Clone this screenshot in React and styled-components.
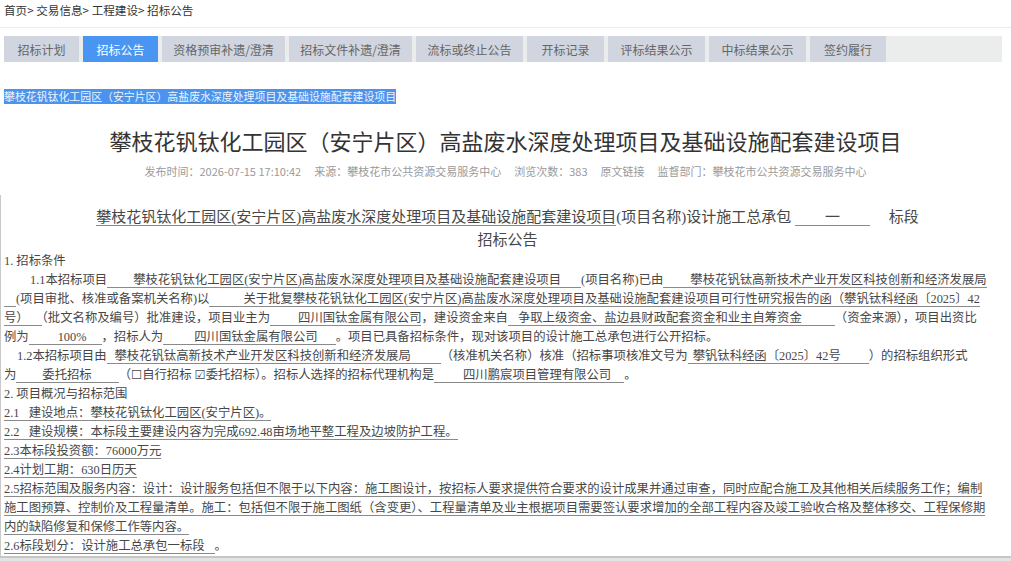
import React from 'react';
import styled, { createGlobalStyle } from 'styled-components';

const Global = createGlobalStyle`
  html, body { margin: 0; padding: 0; background: #fff; }
  body { font-family: "Noto Sans CJK SC", "Noto Sans", sans-serif; }
`;

const Page = styled.div`
  width: 1011px;
  height: 561px;
  overflow: hidden;
  display: flex;
  flex-direction: column;
`;

const Breadcrumb = styled.nav`
  height: 28px;
  box-sizing: border-box;
  padding: 3px 4px 0;
  font-size: 11.6px;
  line-height: 14px;
  color: #333;
  border-bottom: 1px solid #ececec;
`;

const TabBar = styled.div`
  margin: 8px 9px 0 4px;
  height: 26px;
  background: #ebeded;
  display: flex;
  gap: 4px;
`;

const Tab = styled.div`
  width: ${p => p.$w}px;
  background: ${p => (p.$active ? '#4b95f2' : '#d0d5df')};
  color: ${p => (p.$active ? '#fff' : '#666')};
  font-size: 12px;
  display: flex;
  align-items: center;
  justify-content: center;
  white-space: nowrap;
`;

const SelectedRow = styled.div`
  margin-top: 20px;
  padding-left: 4px;
  height: 15px;
`;

const Selected = styled.span`
  display: inline-block;
  height: 15px;
  line-height: 15px;
  font-size: 10.9px;
  background: #4a93ee;
  color: #eef3fb;
  white-space: nowrap;
`;

const Title = styled.h1`
  margin: 28px 0 0;
  font-size: 22px;
  line-height: 30px;
  font-weight: 400;
  color: #333;
  text-align: center;
`;

const Meta = styled.div`
  margin-top: 8px;
  display: flex;
  justify-content: center;
  gap: 13px;
  font-size: 11px;
  line-height: 16px;
  color: #9a9a9a;
  white-space: nowrap;
`;

const Doc = styled.section`
  margin-top: 16px;
  padding: 10.5px 0 0 3px;
  border-left: 1px solid #c9c9c9;
  border-bottom: 2px solid #c6c6c6;
  font-family: "Liberation Serif", "Noto Sans CJK SC", "DejaVu Sans", serif;
  color: #474747;
`;

const Footer = styled.div`
  flex: 1;
  background: #e4e4e4;
`;

const DocHead = styled.div`
  font-size: 15px;
  line-height: 23px;
  text-align: center;
  white-space: nowrap;
`;

const Line = styled.div`
  font-size: 12.35px;
  line-height: 19px;
  height: 19px;
  white-space: nowrap;
  padding-left: ${p => p.$indent || 0}px;
`;

const U = styled.span`
  border-bottom: 1px solid #8a8a8a;
  padding-left: ${p => p.$l || 0}px;
  padding-right: ${p => p.$r || 0}px;
`;

const tabs = [
  ['招标计划', 75],
  ['招标公告', 75, true],
  ['资格预审补遗/澄清', 123],
  ['招标文件补遗/澄清', 123],
  ['流标或终止公告', 107],
  ['开标记录', 77],
  ['评标结果公示', 97],
  ['中标结果公示', 97],
  ['签约履行', 76],
];

const PROJ = '攀枝花钒钛化工园区(安宁片区)高盐废水深度处理项目及基础设施配套建设项目';

export default function App() {
  return (
    <Page>
      <Global />
      <Breadcrumb>首页&gt; 交易信息&gt; 工程建设&gt; 招标公告</Breadcrumb>
      <TabBar>
        {tabs.map(([t, w, a]) => (
          <Tab key={t} $w={w} $active={a}>{t}</Tab>
        ))}
      </TabBar>
      <SelectedRow>
        <Selected>攀枝花钒钛化工园区（安宁片区）高盐废水深度处理项目及基础设施配套建设项目</Selected>
      </SelectedRow>
      <Title>攀枝花钒钛化工园区（安宁片区）高盐废水深度处理项目及基础设施配套建设项目</Title>
      <Meta>
        <span>发布时间：2026-07-15 17:10:42</span>
        <span>来源：攀枝花市公共资源交易服务中心</span>
        <span>浏览次数：383</span>
        <span>原文链接</span>
        <span>监督部门：攀枝花市公共资源交易服务中心</span>
      </Meta>
      <Doc>
        <DocHead>
          <U>{PROJ}</U>(项目名称)设计施工总承包 <U $l={30} $r={30}>一</U>　 标段
        </DocHead>
        <DocHead>招标公告</DocHead>
        <Line>1. 招标条件</Line>
        <Line $indent={26}>
          1.1本招标项目<U $l={26} $r={20}>{PROJ}</U>(项目名称)已由<U $l={27}>攀枝花钒钛高新技术产业开发区科技创新和经济发展局</U>
        </Line>
        <Line>
          <U $l={12} />(项目审批、核准或备案机关名称)以<U $l={34}>关于批复{PROJ}可行性研究报告的函（攀钒钛科经函〔2025〕42</U>
        </Line>
        <Line>
          <U $r={13}>号）</U>（批文名称及编号）批准建设，项目业主为<U $l={28}>四川国钛金属有限公司</U>，建设资金来自<U $l={10} $r={33}>争取上级资金、盐边县财政配套资金和业主自筹资金</U>（资金来源），项目出资比
        </Line>
        <Line>
          例为<U $l={29} $r={15}>100%</U>，招标人为<U $l={31} $r={18}>四川国钛金属有限公司</U>。项目已具备招标条件，现对该项目的设计施工总承包进行公开招标。
        </Line>
        <Line $indent={13}>
          1.2本招标项目由<U $l={8} $r={30}>攀枝花钒钛高新技术产业开发区科技创新和经济发展局</U>（核准机关名称）核准（招标事项核准文号为<U $l={5} $r={28}>攀钒钛科经函〔2025〕42号</U>）的招标组织形式
        </Line>
        <Line>
          为<U $l={26} $r={27}>委托招标</U>（☐自行招标 ☑委托招标）。招标人选择的招标代理机构是<U $l={29} $r={13}>四川鹏宸项目管理有限公司</U>。
        </Line>
        <Line>2. 项目概况与招标范围</Line>
        <Line><U>2.1&nbsp;&nbsp; 建设地点：攀枝花钒钛化工园区(安宁片区)。</U></Line>
        <Line><U>2.2&nbsp;&nbsp; 建设规模：本标段主要建设内容为完成692.48亩场地平整工程及边坡防护工程。</U></Line>
        <Line><U>2.3本标段投资额：76000万元</U></Line>
        <Line><U>2.4计划工期：630日历天</U></Line>
        <Line>
          <U>2.5招标范围及服务内容：设计：设计服务包括但不限于以下内容：施工图设计，按招标人要求提供符合要求的设计成果并通过审查，同时应配合施工及其他相关后续服务工作；编制</U>
        </Line>
        <Line>
          <U>施工图预算、控制价及工程量清单。施工：包括但不限于施工图纸（含变更）、工程量清单及业主根据项目需要签认要求增加的全部工程内容及竣工验收合格及整体移交、工程保修期</U>
        </Line>
        <Line><U>内的缺陷修复和保修工作等内容。</U></Line>
        <Line><U $r={10}>2.6标段划分：设计施工总承包一标段</U>。</Line>
      </Doc>
      <Footer />
    </Page>
  );
}
